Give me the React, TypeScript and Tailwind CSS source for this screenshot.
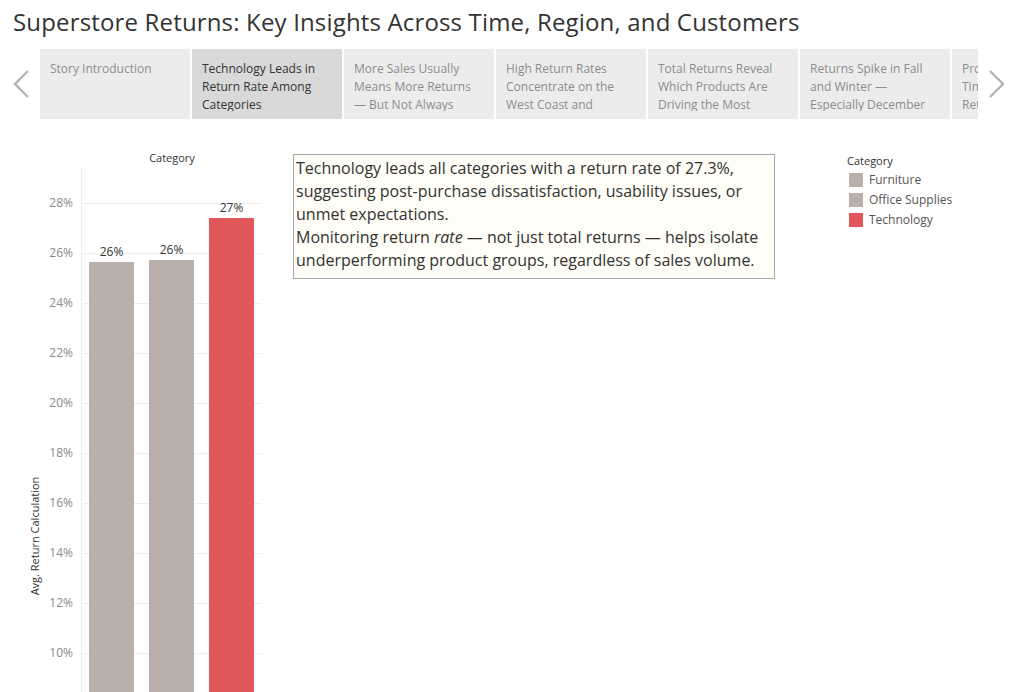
import React from 'react'

const tabs = [
    'Story Introduction',
    'Technology Leads in Return Rate Among Categories',
    'More Sales Usually Means More Returns — But Not Always',
    'High Return Rates Concentrate on the West Coast and South',
    'Total Returns Reveal Which Products Are Driving the Most Losses',
    'Returns Spike in Fall and Winter — Especially December',
    'Product Shipping Time Has Little Return Impact',
]

const ticks = [28, 26, 24, 22, 20, 18, 16, 14, 12, 10, 8]
const yOf = (v: number) => 203 + (28 - v) * 25

const bars = [
    { name: 'Furniture', x: 89, value: 25.64, label: '26%', color: '#b9b0ab' },
    { name: 'Office Supplies', x: 149, value: 25.72, label: '26%', color: '#b9b0ab' },
    { name: 'Technology', x: 209, value: 27.4, label: '27%', color: '#e15759' },
]

const font = { fontFamily: '"Open Sans", "Liberation Sans", sans-serif' }

function Chevron({ dir }: { dir: 'left' | 'right' }) {
    return (
        <svg width="18" height="30" viewBox="0 0 18 30" className="shrink-0">
            <path
                d={dir === 'left' ? 'M16 2 L3 15 L16 28' : 'M2 2 L15 15 L2 28'}
                fill="none"
                stroke="#b4b4b4"
                strokeWidth="2.4"
            />
        </svg>
    )
}

function Chart() {
    return (
        <svg width="285" height="573" className="shrink-0" style={font}>
            <g transform="translate(0,-119)">
                <text x="172" y="162" textAnchor="middle" fontSize="11" fill="#333">Category</text>
                <line x1="81.5" y1="167" x2="81.5" y2="700" stroke="#eeeeee" />
                {ticks.map(t => (
                    <g key={t}>
                        <line x1="82" y1={yOf(t) + 0.5} x2="262" y2={yOf(t) + 0.5} stroke="#eeeeee" />
                        <text x="73" y={yOf(t) + 4} textAnchor="end" fontSize="12" fill="#8a8a8a">{t}%</text>
                    </g>
                ))}
                {bars.map(b => (
                    <g key={b.name}>
                        <rect x={b.x} y={yOf(b.value)} width="45" height={720 - yOf(b.value)} fill={b.color} />
                        <text x={b.x + 22.5} y={yOf(b.value) - 6} textAnchor="middle" fontSize="12" fill="#333">{b.label}</text>
                    </g>
                ))}
                <text transform="translate(39,536) rotate(-90)" textAnchor="middle" fontSize="11" fill="#333">Avg. Return Calculation</text>
            </g>
        </svg>
    )
}

export default function App() {
    return (
        <div className="w-[1021px] h-[692px] overflow-hidden bg-white text-[#333]" style={font}>
            <h1 className="pl-[13px] pt-[6px] h-[49px] text-[24px] leading-[32px] tracking-[0.16px] text-[#333]">
                Superstore Returns: Key Insights Across Time, Region, and Customers
            </h1>
            <div className="flex items-center h-[70px]">
                <div className="w-[40px] flex justify-center pl-[2px]"><Chevron dir="left" /></div>
                <div className="flex gap-[2px] w-[938px] overflow-hidden h-[70px]">
                    {tabs.map((t, i) => (
                        <div
                            key={t}
                            className={`${i === 1 ? 'bg-[#d9d9d9] text-[#333]' : 'bg-[#ececec] text-[#8c8c8c]'} w-[150px] shrink-0 h-[70px] pl-[10px] pt-[11px]`}
                        >
                            <div className="w-[120px] h-[51px] overflow-hidden text-[12px] leading-[18px]">{t}</div>
                        </div>
                    ))}
                </div>
                <div className="flex-1 flex justify-center pr-[6px]"><Chevron dir="right" /></div>
            </div>
            <div className="flex">
                <Chart />
                <div className="ml-[8px] mt-[35px] w-[482px] h-[125px] border border-[#a8a8a8] bg-[#fefdf6] px-[2px] pt-[2px] text-[16px] leading-[23px] text-[#333]">
                    Technology leads all categories with a return rate of 27.3%, suggesting post-purchase dissatisfaction, usability issues, or unmet expectations.
                    <br />
                    Monitoring return <i>rate</i> — not just total returns — helps isolate underperforming product groups, regardless of sales volume.
                </div>
                <div className="ml-[71px] mt-[33px] text-[12px]">
                    <div className="text-[11px] leading-[18px] text-[#333] pl-[1px]">Category</div>
                    {bars.map(b => (
                        <div key={b.name} className="flex items-center gap-[6px] h-[20px] pl-[3px] text-[#555]">
                            <span className="w-[14px] h-[14px]" style={{ backgroundColor: b.color }} />
                            {b.name}
                        </div>
                    ))}
                </div>
            </div>
        </div>
    )
}
